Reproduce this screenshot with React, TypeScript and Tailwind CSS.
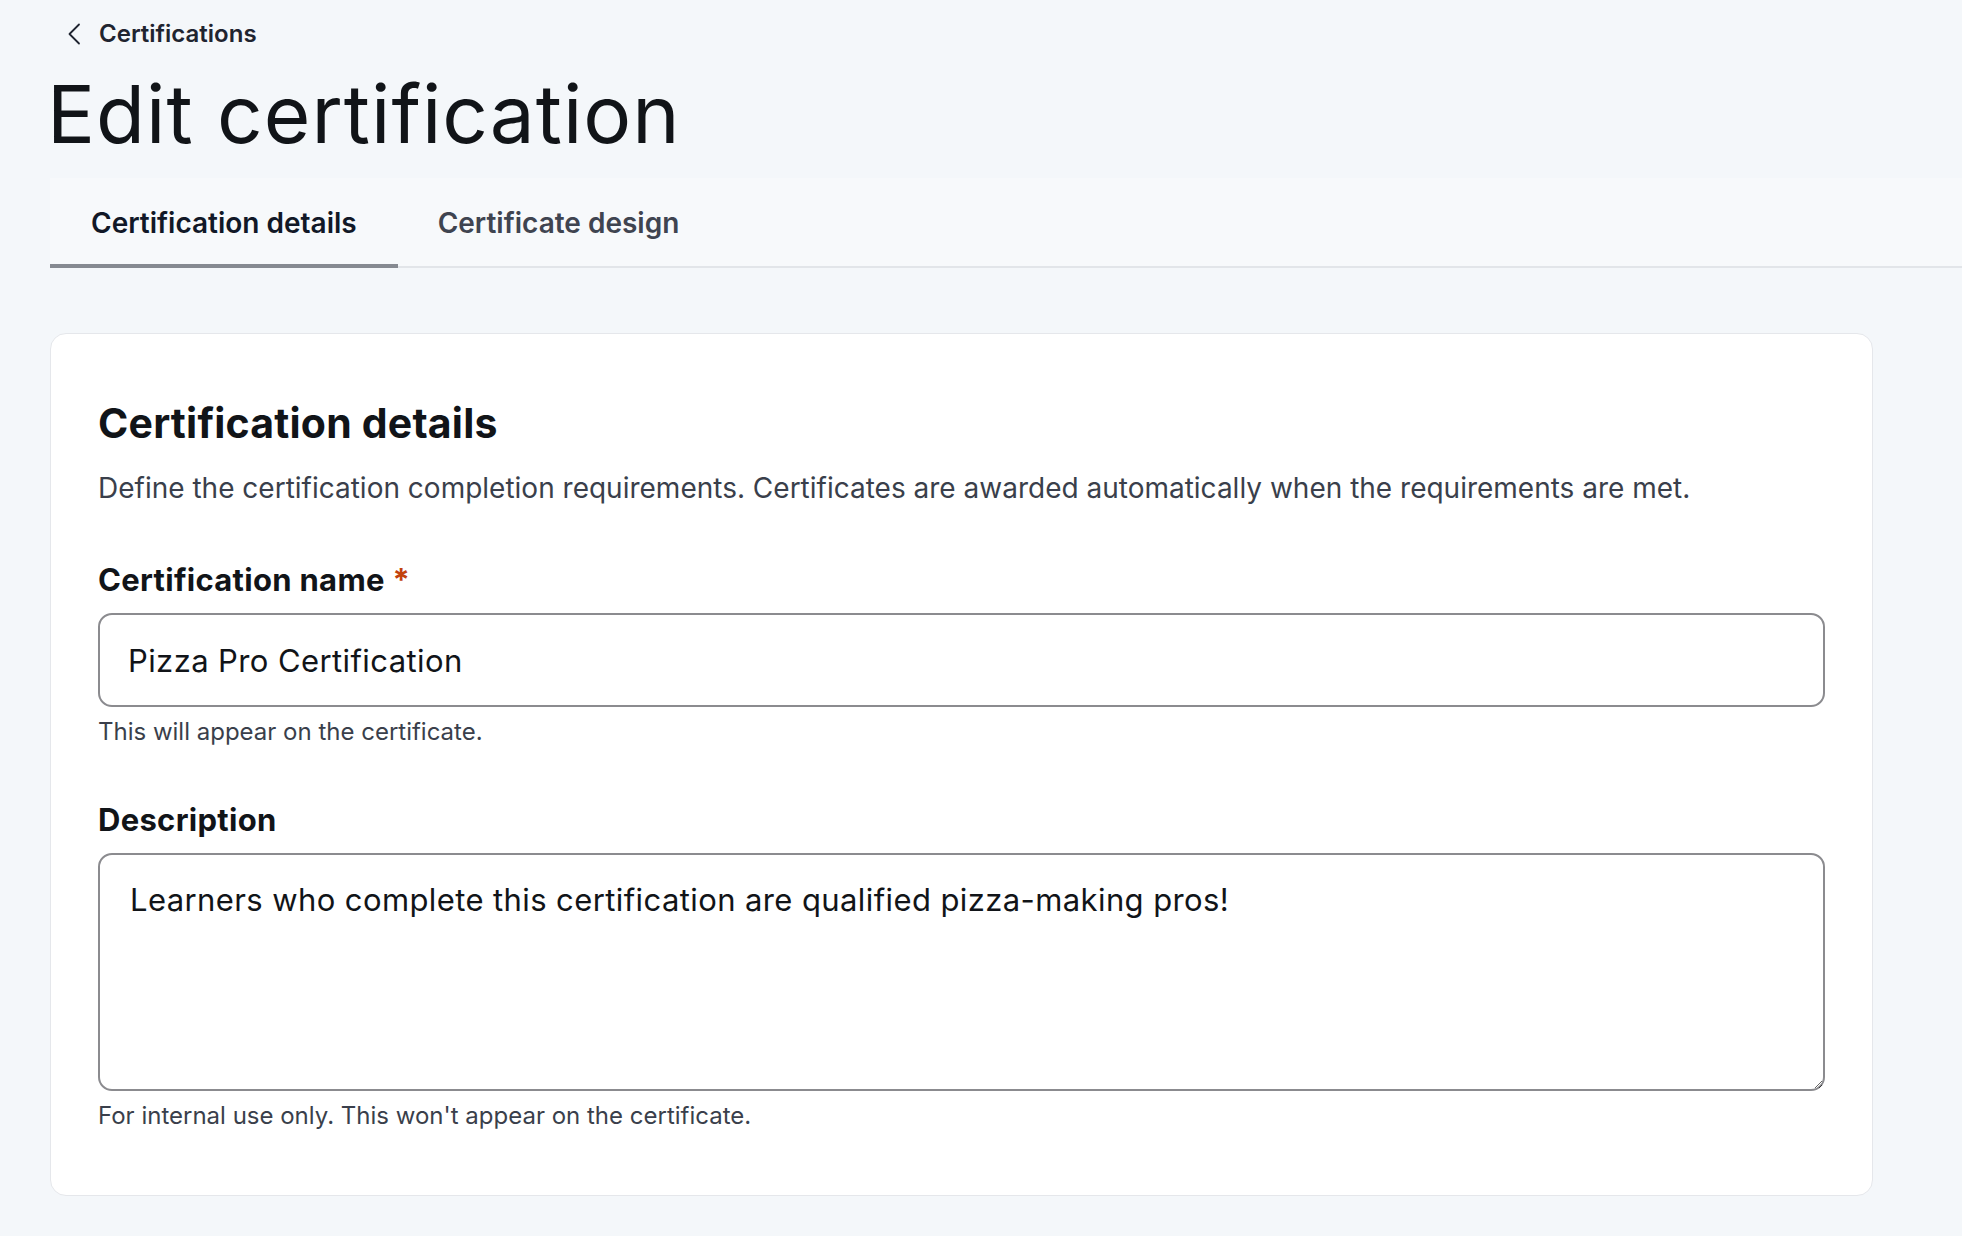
export default function App() {
    const sans = { fontFamily: 'Inter, "Noto Sans", sans-serif' }
    return (
        <div className="min-h-screen bg-[#f4f7fa] pt-[18px] pb-10" style={sans}>
            {/* Breadcrumb */}
            <div className="pl-[50px]">
                <a href="#" className="flex items-center gap-[18px] pl-[17px] h-8 text-[24px] leading-8 font-semibold text-[#1f2430]">
                    <svg width="14" height="22" viewBox="0 0 14 22" fill="none" className="shrink-0">
                        <polyline points="12,1.5 2.5,11 12,20.5" stroke="#1f2430" strokeWidth="1.8" strokeLinecap="round" strokeLinejoin="round" />
                    </svg>
                    <span>Certifications</span>
                </a>
            </div>

            {/* Title */}
            <h1 className="mt-6 pl-[47px] text-[80px] leading-[80px] font-normal text-[#111418] tracking-[1px]">
                Edit certification
            </h1>

            {/* Tabs */}
            <div className="mt-6 ml-[50px] flex bg-[#f7f9fb] border-b-2 border-[#e2e5e9]">
                <button className="px-[41px] pt-[27px] pb-[23px] -mb-[2px] border-b-4 border-[#868a91] text-[28px] leading-9 font-semibold text-[#111827]">
                    Certification details
                </button>
                <button className="px-10 pt-[27px] pb-[25px] text-[28px] leading-9 font-semibold text-[#3f4450]">
                    Certificate design
                </button>
            </div>

            {/* Card */}
            <div className="mt-[65px] ml-[50px] w-[1823px] bg-white border border-[#e5e7eb] rounded-[16px] px-[47px] pt-[65px] pb-[63px]">
                <h2 className="text-[41px] leading-[48px] font-bold tracking-[0.2px] text-[#111418]">Certification details</h2>
                <p className="mt-[21px] text-[28px] leading-10 text-[#3a3f4b]">
                    Define the certification completion requirements. Certificates are awarded automatically when the requirements are met.
                </p>

                <label className="block mt-[52px] text-[31px] leading-10 font-bold tracking-[0.3px] text-[#111418]">
                    Certification name <span className="text-[#c2410c]">*</span>
                </label>
                <input
                    defaultValue="Pizza Pro Certification"
                    className="block mt-[13px] w-full h-[94px] px-[28px] rounded-[14px] border-2 border-[#8b8b8f] bg-white text-[31px] tracking-[0.4px] text-[#111418] outline-none"
                    style={sans}
                />
                <p className="mt-[9px] text-[24px] leading-8 text-[#3a3f4b]">This will appear on the certificate.</p>

                <label className="block mt-[52px] text-[31px] leading-10 font-bold tracking-[0.3px] text-[#111418]">Description</label>
                <textarea
                    defaultValue="Learners who complete this certification are qualified pizza-making pros!"
                    className="block mt-[13px] w-full h-[238px] px-[30px] pt-[25px] rounded-[14px] border-2 border-[#8b8b8f] bg-white text-[31px] leading-10 tracking-[0.4px] text-[#111418] outline-none resize-y"
                    style={sans}
                />
                <p className="mt-[9px] text-[24px] leading-8 text-[#3a3f4b]">For internal use only. This won't appear on the certificate.</p>
            </div>
        </div>
    )
}
